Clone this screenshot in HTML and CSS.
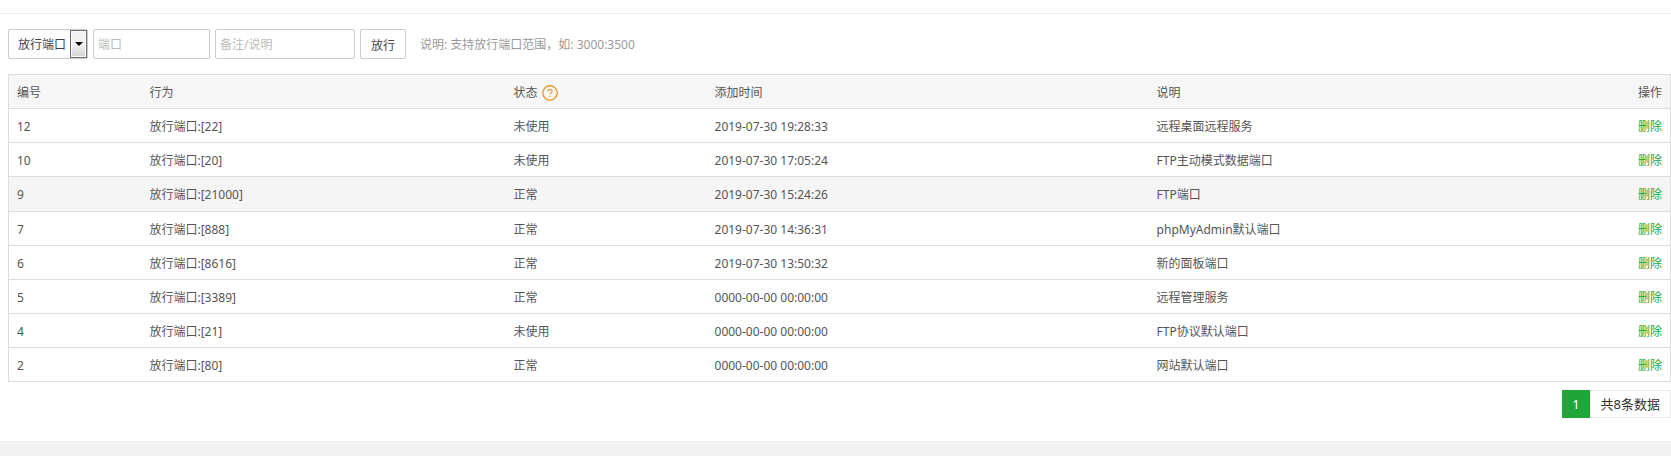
FILE: index.html
```
<!DOCTYPE html>
<html lang="zh-CN">
<head>
    <meta charset="UTF-8">
    <meta name="viewport" content="width=device-width, initial-scale=1.0">
    <title>放行端口</title>
    <link rel="stylesheet" href="styles.css">
</head>
<body>
    <div class="firewall">
        <!-- Add rule -->
        <form class="toolbar">
            <div class="select-box">
                <select id="firewall-type" aria-label="类型">
                    <option value="port">放行端口</option>
                    <option value="ip">屏蔽IP</option>
                </select>
                <span class="select-arrow"></span>
            </div>
            <input type="text" class="input-port" aria-label="端口" placeholder="端口">
            <input type="text" class="input-remark" aria-label="备注/说明" placeholder="备注/说明">
            <button type="button">放行</button>
            <span class="tip">说明: 支持放行端口范围，如: 3000:3500</span>
        </form>

        <!-- Rule list -->
        <table class="rules">
            <thead>
                <tr>
                    <th class="col-id">编号</th>
                    <th class="col-action">行为</th>
                    <th class="col-status">
                        <div class="status-title">状态
                            <a href="#" class="help" aria-label="帮助">
                                <svg width="16" height="16" viewBox="0 0 16 16" fill="none" stroke="#e8963c">
                                    <circle cx="8" cy="8" r="7.2" fill="#fff8ef" stroke-width="1.4"/>
                                    <path d="M5.9 6.5c0-1.3.9-2.1 2.1-2.1s2.1.8 2.1 1.9c0 1.5-2.1 1.7-2.1 3.3" stroke-width="1.2"/>
                                    <path d="M8 10.8v1.3" stroke-width="1.3"/>
                                </svg>
                            </a>
                        </div>
                    </th>
                    <th class="col-time">添加时间</th>
                    <th>说明</th>
                    <th class="col-op">操作</th>
                </tr>
            </thead>
            <tbody>
                <tr><td>12</td><td>放行端口:[22]</td><td>未使用</td><td>2019-07-30 19:28:33</td><td>远程桌面远程服务</td><td class="col-op"><a href="#">删除</a></td></tr>
                <tr><td>10</td><td>放行端口:[20]</td><td>未使用</td><td>2019-07-30 17:05:24</td><td>FTP主动模式数据端口</td><td class="col-op"><a href="#">删除</a></td></tr>
                <tr class="active"><td>9</td><td>放行端口:[21000]</td><td>正常</td><td>2019-07-30 15:24:26</td><td>FTP端口</td><td class="col-op"><a href="#">删除</a></td></tr>
                <tr><td>7</td><td>放行端口:[888]</td><td>正常</td><td>2019-07-30 14:36:31</td><td>phpMyAdmin默认端口</td><td class="col-op"><a href="#">删除</a></td></tr>
                <tr><td>6</td><td>放行端口:[8616]</td><td>正常</td><td>2019-07-30 13:50:32</td><td>新的面板端口</td><td class="col-op"><a href="#">删除</a></td></tr>
                <tr><td>5</td><td>放行端口:[3389]</td><td>正常</td><td>0000-00-00 00:00:00</td><td>远程管理服务</td><td class="col-op"><a href="#">删除</a></td></tr>
                <tr><td>4</td><td>放行端口:[21]</td><td>未使用</td><td>0000-00-00 00:00:00</td><td>FTP协议默认端口</td><td class="col-op"><a href="#">删除</a></td></tr>
                <tr><td>2</td><td>放行端口:[80]</td><td>正常</td><td>0000-00-00 00:00:00</td><td>网站默认端口</td><td class="col-op"><a href="#">删除</a></td></tr>
            </tbody>
        </table>

        <!-- Pages -->
        <div class="page">
            <span class="page-current">1</span>
            <span class="page-count">共8条数据</span>
        </div>
    </div>
    <div class="gap-bar"></div>
</body>
</html>
```

FILE: styles.css
```
* {
    box-sizing: border-box;
}
body {
    margin: 0;
    padding-top: 13px;
    background-color: #fff;
    color: #555;
    font-family: "Noto Sans", "Noto Sans CJK SC", sans-serif;
    font-size: 12px;
    line-height: 18px;
}
a {
    color: #20a53a;
    text-decoration: none;
}
.firewall {
    border-top: 1px solid #eee;
    padding: 15px 0 23px 8px;
}
/* Toolbar */
.toolbar {
    display: flex;
    align-items: center;
    gap: 5px;
    margin-bottom: 15px;
}
.toolbar select, .toolbar input, .toolbar button {
    height: 30px;
    border: 1px solid #ccc;
    border-radius: 2px;
    background-color: #fff;
    color: #444;
    font-family: inherit;
    font-size: 12px;
}
.toolbar input {
    padding: 1px 4px 0;
}
.toolbar input::placeholder {
    color: #bbb;
}
.select-box {
    position: relative;
    width: 80px;
}
.select-box select {
    display: block;
    width: 100%;
    padding: 1px 0 0 9px;
    appearance: none;
}
.select-arrow {
    position: absolute;
    top: 1px;
    right: 1px;
    bottom: 1px;
    width: 17px;
    border: 1px solid #707070;
    background: linear-gradient(#f2f2f2 50%, #d2d2d2);
    box-shadow: inset 0 0 0 1px #fafafa;
    pointer-events: none;
}
.select-arrow::after {
    content: "";
    position: absolute;
    top: 11px;
    left: 4px;
    border: 4px solid transparent;
    border-top-color: #000;
    border-bottom: 0;
}
.input-port {
    width: 117px;
}
.input-remark {
    width: 140px;
}
.toolbar button {
    width: 46px;
    padding: 1px 0 0;
}
.tip {
    margin-left: 9px;
    padding-top: 2px;
    color: #999;
}
/* Table */
.rules {
    width: 100%;
    border: 1px solid #ddd;
    border-collapse: collapse;
    table-layout: fixed;
}
.rules th, .rules td {
    height: 34px;
    padding: 2px 8px 0;
    border-bottom: 1px solid #ddd;
    font-weight: normal;
    text-align: left;
}
.rules th {
    background-color: #f6f6f6;
}
.rules .active {
    background-color: #f5f5f5;
}
.rules .active td {
    height: 35px;
}
.col-id {
    width: 8%;
}
.col-action {
    width: 21.9%;
}
.col-status {
    width: 12.1%;
}
.col-time {
    width: 26.6%;
}
.rules .col-op {
    text-align: right;
}
.status-title {
    display: flex;
    align-items: center;
    gap: 5px;
}
.help svg {
    display: block;
}
/* Pagination */
.page {
    display: flex;
    justify-content: flex-end;
    margin-top: 8px;
    color: #333;
    font-size: 13px;
    line-height: 26px;
}
.page-current {
    padding: 1px 10px;
    background-color: #20a53a;
    color: #fff;
}
.page-count {
    padding: 0 10px;
    border: 1px solid #ececec;
}
.gap-bar {
    height: 15px;
    background-color: #f1f1f1;
}
```
